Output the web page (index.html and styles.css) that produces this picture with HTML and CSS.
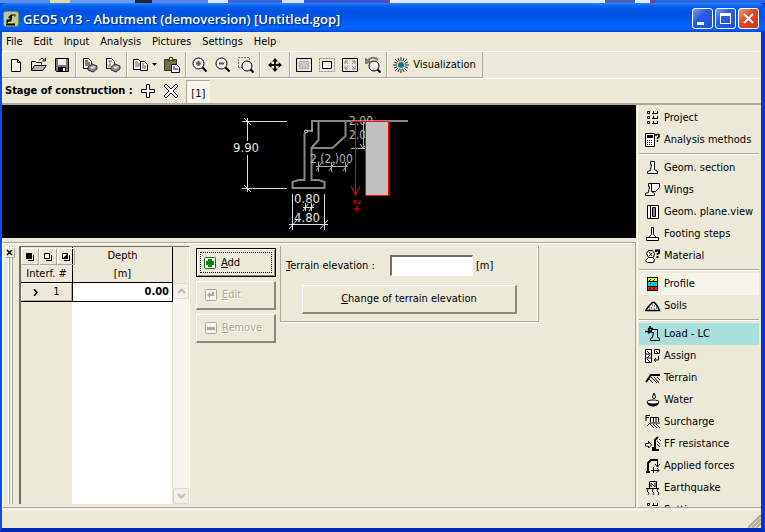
FILE: index.html
```
<!DOCTYPE html>
<html lang="en">
<head>
<meta charset="utf-8">
<title>GEO5 v13 - Abutment</title>
<link rel="stylesheet" href="styles.css">
</head>
<body>
<div class="desktop"></div>
<div class="window">
  <header class="titlebar">
    <svg class="app-icon" viewBox="0 0 16 16"><rect width="16" height="16" rx="3" fill="#74875e"/><rect x="1" y="1" width="14" height="14" rx="2" fill="#b9c99d"/><path d="M3 13.500h9M4.500 12V9.500h3l1-5h4M8 4.500L6 7" stroke="#000" stroke-width="2" fill="none"/><path d="M9 5l3-1-2 3z" fill="#fff200"/><path d="M5 11.500h5" stroke="#fff200"/></svg>
    <h1>GEO5 v13 - Abutment (demoversion) [Untitled.gop]</h1>
    <div class="captions">
      <button class="cap" aria-label="Minimize"><svg viewBox="0 0 19 19"><path d="M4 13h7v3H4z" fill="#fff"/></svg></button>
      <button class="cap" aria-label="Maximize"><svg viewBox="0 0 19 19"><path d="M4 4h11v11H4zM5 7v7h9V7z" fill="#fff" fill-rule="evenodd"/></svg></button>
      <button class="cap close" aria-label="Close"><svg viewBox="0 0 19 19"><path d="M5 5l9 9M14 5l-9 9" stroke="#fff" stroke-width="2"/></svg></button>
    </div>
  </header>
  <nav class="menu">
    <a href="#">File</a><a href="#">Edit</a><a href="#">Input</a><a href="#">Analysis</a><a href="#">Pictures</a><a href="#">Settings</a><a href="#">Help</a>
  </nav>
  <div class="toolbar">
    <div class="group">
      <button aria-label="New"><svg viewBox="0 0 16 16"><path d="M3.500 2.500h6l3 3v9h-9zM9.500 2.500v3h3" fill="#f6f5ee" stroke="#000"/></svg></button>
      <button aria-label="Open"><svg viewBox="0 0 16 16"><path d="M.5 13.500v-9h4l1 1h5v2" fill="#eee" stroke="#000"/><path d="M.5 13.500l3-5h12l-4 5z" fill="#b8b8b8" stroke="#000"/><path d="M8 3.500l2-2h2l2 2M14.500 1v3h-3" fill="none" stroke="#000"/></svg></button>
      <button aria-label="Save"><svg viewBox="0 0 16 16"><path d="M1.500 1.500h13v13h-12l-1-1z" fill="#777" stroke="#000"/><path d="M4 2h8v6H4z" fill="#eee"/><path d="M4 10h8v5H4z" fill="#000"/><path d="M9 11h2v3H9z" fill="#eee"/></svg></button>
    </div>
    <div class="group">
      <button aria-label="Print"><svg viewBox="0 0 16 16"><path d="M1.500 1.500h5l3 3v7h-8z" fill="#fff" stroke="#000"/><path d="M3 4h3M3 6h5M3 8h5" stroke="#000"/><path d="M6 10l4-3 5 2v3l-4 3-5-2z" fill="#888" stroke="#333"/><path d="M8 10l4-1 2 1-4 2z" fill="#ddd"/></svg></button>
      <button aria-label="Print picture"><svg viewBox="0 0 16 16"><path d="M1.500 1.500h5l3 3v7h-8z" fill="#eee" stroke="#000"/><path d="M3 4h4M5 4v5M3 9h3" stroke="#777"/><path d="M6 10l4-3 5 2v3l-4 3-5-2z" fill="#888" stroke="#333"/><path d="M8 10l4-1 2 1-4 2z" fill="#ddd"/></svg></button>
    </div>
    <div class="group">
      <button class="wide" aria-label="Copy"><svg viewBox="0 0 16 16"><path d="M.5 2.500h5l3 3v7h-8z" fill="#fff" stroke="#000"/><path d="M2 5h3M2 7h5M2 9h5" stroke="#555"/><path d="M7.500 4.500h4l3 3v6h-7z" fill="#fff" stroke="#000"/><path d="M9 7h2M9 9h4M9 11h4" stroke="#555"/></svg><svg class="drop" viewBox="0 0 5 3"><path d="M0 0h5L2.500 3z"/></svg></button>
      <button aria-label="Paste"><svg viewBox="0 0 16 16"><path d="M.5 2.500h12v11H.5z" fill="#77713c" stroke="#333"/><path d="M3.500 3.500v-1h2v-2h3v2h2v1z" fill="#ef3" stroke="#333"/><path d="M7.500 7.500h5l3 3v5h-8z" fill="#fff" stroke="#006"/><path d="M9 10h2M9 12h5" stroke="#006"/></svg></button>
    </div>
    <div class="group">
      <button aria-label="Zoom in"><svg viewBox="0 0 16 16"><circle cx="6.500" cy="6.500" r="5.500" fill="#eee" stroke="#000"/><path d="M4 6.500h5M6.500 4v5" stroke="#555" stroke-width="2"/><path d="M10.500 10.500l4 4" stroke="#000" stroke-width="2"/></svg></button>
      <button aria-label="Zoom out"><svg viewBox="0 0 16 16"><circle cx="6.500" cy="6.500" r="5.500" fill="#eee" stroke="#000"/><path d="M4 6.500h5" stroke="#555" stroke-width="2"/><path d="M10.500 10.500l4 4" stroke="#000" stroke-width="2"/></svg></button>
      <button aria-label="Zoom window"><svg viewBox="0 0 16 16"><path d="M.5 10V.5h11V4M.5 10.500H4" fill="none" stroke="#777" stroke-dasharray="2 1"/><circle cx="9" cy="9" r="5" fill="#eee" stroke="#000"/><path d="M12.500 12.500l3 3" stroke="#000" stroke-width="2"/></svg></button>
    </div>
    <div class="group pan">
      <button aria-label="Pan"><svg viewBox="0 0 16 16"><path d="M8 1l3 3.500H9V7h2.500V5L15 8l-3.500 3V9H9v2.500h2L8 15l-3-3.500h2V9H4.500v2L1 8l3.500-3v2H7V4.500H5z"/></svg></button>
    </div>
    <div class="group">
      <button aria-label="Zoom all"><svg viewBox="0 0 16 16"><path d="M.5 1.500h15v13H.5z" fill="#e4e4e0" stroke="#000"/><path d="M3.500 4.500h9v7h-9z" fill="#c8c8c8" stroke="#888" stroke-dasharray="1 1"/></svg></button>
      <button aria-label="Zoom selection"><svg viewBox="0 0 16 16"><path d="M.5 1.500h15v13H.5z" fill="none" stroke="#888" stroke-dasharray="2 1"/><path d="M3.500 4.500h9v7h-9z" fill="#eee" stroke="#000"/></svg></button>
      <button aria-label="Fit"><svg viewBox="0 0 16 16"><path d="M.5 1.500h15v13H.5z" fill="#e4e4e0" stroke="#000"/><path d="M3 7V4h3M10 4h3v3M13 9v3h-3M6 12H3V9M3 4l3 3M13 4l-3 3M13 12l-3-3M3 12l3-3" fill="none" stroke="#888"/></svg></button>
      <button aria-label="Previous zoom"><svg viewBox="0 0 16 16"><circle cx="9" cy="9" r="5" fill="#eee" stroke="#000"/><path d="M12.500 12.500l3 3" stroke="#000" stroke-width="2"/><path d="M0 2l1 4 4-1zM3 4c2-4 7-4 10-1" fill="none" stroke="#777" stroke-width="2"/></svg></button>
    </div>
    <div class="group last">
      <button class="vis"><svg viewBox="0 0 16 16"><path d="M8 0v16M0 8h16M2 2l12 12M14 2L2 14M5 1l6 14M11 1L5 15M1 5l14 6M15 5L1 11" stroke="#222"/><circle cx="8" cy="8" r="4" fill="#dde"/><circle cx="8" cy="8" r="3" fill="#087a78"/></svg>Visualization</button>
    </div>
  </div>
  <div class="stage">
    <strong>Stage of construction :</strong>
    <button aria-label="Add stage"><svg viewBox="0 0 16 16"><path d="M6.500 1.500h3v5h5v3h-5v5h-3v-5h-5v-3h5z" fill="#fff" stroke="#000"/></svg></button>
    <button aria-label="Remove stage"><svg viewBox="0 0 16 16"><path d="M1 3l2-2 5 5 5-5 2 2-5 5 5 5-2 2-5-5-5 5-2-2 5-5z" fill="#fff" stroke="#000"/></svg></button>
    <button class="stage-tab">[1]</button>
  </div>
  <div class="body">
    <main class="work">
      <svg class="drawing" viewBox="2 105 634 133" preserveAspectRatio="xMidYMid slice">
        <g fill="none" stroke="#ddd">
          <path d="M242 121.500h45M242 188.500h45M247.500 118v23M247.500 155v37M244 118l7 7M244 185l7 7"/>
          <path d="M292.500 194v36M324.500 194v36M289 224.500h39M289 229l8-9M320 229l8-9M305.500 203v8M311.500 203v8M303 207.500h11M303 211l5-7M309 211l5-7"/>
          <path d="M318.500 162v10M331.500 162v10M345.500 162v10M316 166.500h32M316 171l6-9M329 171l6-9M343 171l6-9M351 148.500h14M363.500 121v28M360 144l3 4 4-4" stroke="#aaa"/>
        </g>
        <path d="M304.500 133v47h-6l-6 2v6h32v-6l-6-2h-7v-32h21l13-12v-15M318.500 121v19l-7 8M306 131h6v-10h96" fill="none" stroke="#888" stroke-width="2"/>
        <circle cx="306" cy="131.500" r="1.500" fill="#000" stroke="#ddd"/>
        <g class="dims"><text x="233" y="152">9.90</text><text x="294" y="203">0.80</text><text x="294" y="222">4.80</text></g>
        <g class="dims dim-grey"><text x="310" y="163">2.(2.)00</text><text x="349" y="125">2.00</text><text x="349" y="139">2.0</text></g>
        <path d="M365.500 121.500h23v74h-23z" fill="#c0c0c0" stroke="#f00"/>
        <path d="M389 122v73" stroke="#f00"/>
        <path d="M351 121.500h15M355.500 121v75M351 186l4.500 9 4.500-9" fill="none" stroke="#f00"/>
        <text class="axis" transform="translate(360 213) rotate(-90)">+z</text>
      </svg>
      <section class="panel">
        <div class="grip"><button class="x" aria-label="Close panel"><svg viewBox="0 0 7 7"><path d="M1 1l5 5M6 1L1 6" stroke="#000" stroke-width="1.500"/></svg></button></div>
        <div class="grid-box">
          <table>
            <thead>
              <tr><th class="tools"><div><button aria-label="Select all"><svg viewBox="0 0 10 10"><path d="M1 1h6v6H1zM8 3h1v6H3V8h5z"/></svg></button><button aria-label="Select none"><svg viewBox="0 0 10 10"><path d="M1.500 1.500h5v5h-5z" fill="#fff" stroke="#000"/><path d="M8 3h1v6H3V8h5z"/></svg></button><button aria-label="Invert selection"><svg viewBox="0 0 10 10"><path d="M1.500 1.500h5v5h-5z" fill="#fff" stroke="#000"/><path d="M1 7l6-6v6zM8 3h1v6H3V8h5z"/></svg></button></div></th><th>Depth</th></tr>
              <tr><th>Interf. #</th><th>[m]</th></tr>
            </thead>
            <tbody><tr><th class="rowhead"><div><svg viewBox="0 0 5 7"><path d="M1 0l3 3.500L1 7" fill="none" stroke="#000" stroke-width="1.500"/></svg><span>1</span></div></th><td>0.00</td></tr></tbody>
          </table>
          <div class="scroll"><button aria-label="Scroll up"><svg viewBox="0 0 9 6"><path d="M1 5l3.500-3.500L8 5" fill="none" stroke="#bbb" stroke-width="2"/></svg></button><button aria-label="Scroll down"><svg viewBox="0 0 9 6"><path d="M1 1l3.500 3.500L8 1" fill="none" stroke="#bbb" stroke-width="2"/></svg></button></div>
        </div>
        <div class="actions">
          <button class="raised add"><svg viewBox="0 0 12 12"><rect x=".5" y=".5" width="11" height="11" rx="1" fill="#fff" stroke="#176b17"/><path d="M4 2h4v2h2v4H8v2H4V8H2V4h2z" fill="#0a860a"/></svg><span><u>A</u>dd</span></button>
          <button class="raised" disabled><svg viewBox="0 0 12 12"><rect x=".5" y=".5" width="11" height="11" rx="1" fill="#f6f5ee" stroke="#aca899"/><path d="M2 6l3-3v2h2V3h2v4H5v2z" fill="#aca899"/></svg><span><u>E</u>dit</span></button>
          <button class="raised" disabled><svg viewBox="0 0 12 12"><rect x=".5" y=".5" width="11" height="11" rx="1" fill="#f6f5ee" stroke="#aca899"/><path d="M2 5h8v3H2z" fill="#aca899"/></svg><span><u>R</u>emove</span></button>
        </div>
        <div class="terrain">
          <div class="field"><label for="elev"><u>T</u>errain elevation :</label><input id="elev" type="text"><span>[m]</span></div>
          <button class="raised change"><span><u>C</u>hange of terrain elevation</span></button>
        </div>
      </section>
    </main>
    <nav class="side">
      <a href="#"><svg viewBox="0 0 16 16"><path d="M2.500 1.500h2v2h-2zM2.500 6.500h2v2h-2zM2.500 11.500h2v2h-2zM7 3.500h6M7 8.500h6M7 13.500h6M8.500 1v2M12.500 1v2M8.500 6v2M12.500 6v2M8.500 11v2M12.500 11v2" fill="none" stroke="#000"/></svg>Project</a>
      <a href="#"><svg viewBox="0 0 16 16"><path d="M.5 1.500h9v13h-9z" fill="#fff" stroke="#000"/><path d="M2 3h6v3H2zM2 8h1v1H2zM4 8h1v1H4zM6 8h1v1H6zM2 10h1v1H2zM4 10h1v1H4zM6 10h1v1H6zM2 12h1v1H2zM4 12h1v1H4zM6 12h1v1H6z"/><path d="M11 4V2.500h3V5l-1.500 1v1M12.500 8v2" fill="none" stroke="#000" stroke-width="1.500"/></svg>Analysis methods</a>
      <hr>
      <a href="#"><svg viewBox="0 0 16 16"><path d="M2.500 13.500v-2l3-1 1-6h-1v-3h4v8l3 2v2z" fill="#fff" stroke="#000"/></svg>Geom. section</a>
      <a href="#"><svg viewBox="0 0 16 16"><path d="M.5 13.500v-2l3-1 1-6h-1v-3h3v8l3 2v2z" fill="#fff" stroke="#000"/><path d="M6.500 1.500h8v4l-4 4h-4z" fill="#fff" stroke="#000"/></svg>Wings</a>
      <a href="#"><svg viewBox="0 0 16 16"><path d="M2.500 1.500h11v13h-11z" fill="#fff" stroke="#000"/><path d="M5.500 1v14M7.500 3.500h3v9h-3z" fill="#888" stroke="#000"/></svg>Geom. plane.view</a>
      <a href="#"><svg viewBox="0 0 16 16"><path d="M1.500 11.500h12v3h-12zM3.500 11.500l3-3v-7h2v7l3 3z" fill="#fff" stroke="#000"/></svg>Footing steps</a>
      <a href="#"><svg viewBox="0 0 16 16"><path d="M1.500 5.500l2-3h4l2 3-1 4h-5zM3.500 9.500l-3 3 2 2h6l1-3-2-2" fill="#fff" stroke="#000"/><path d="M4 4l3 4M7 5l-3 3" stroke="#000"/><path d="M11 4V2.500h3V5l-1.500 1v1M12.500 8v2" fill="none" stroke="#000" stroke-width="2"/></svg>Material</a>
      <hr>
      <a href="#" class="hot"><svg viewBox="0 0 16 16"><path d="M2 1h11v14H2z"/><path d="M3 2h9v3H3z" fill="#ff0"/><path d="M3 6h9v4H3z" fill="#0dd"/><path d="M3 11h9v3H3z" fill="#e22"/><path d="M4 5l2-2M8 5l2-2M5 7.500h1M8 8.500h1M10 7.500h1M4 13l2-1M8 13l2-1" stroke="#000" fill="none"/></svg>Profile</a>
      <a href="#"><svg viewBox="0 0 16 16"><path d="M.5 12.500l3-4 4-4h2l3 4 2 4z" fill="#fff" stroke="#000" stroke-width="1.500"/><path d="M4 9h1M7 7h1M9 8h1M6 10h1M9 11h1M11 10h1M4 11h1" stroke="#000"/></svg>Soils</a>
      <hr>
      <a href="#" class="active"><svg viewBox="0 0 16 16"><path d="M5.500 14.500v-2l2-1 1-5h-2v-3h6v8l2 1v2z" fill="none" stroke="#000"/><path d="M5 0v3M3 2.500h5M0 5.500h6M3 3.500l3 2-3 2" fill="none" stroke="#000" stroke-width="1.500"/></svg>Load - LC</a>
      <a href="#"><svg viewBox="0 0 16 16"><path d="M.5 1.500h6v13h-6zM9.500 1.500h5v4h-5zM.5 6h6M.5 10h6" fill="#fff" stroke="#000"/><path d="M2 3l3 3M5 7l-3 3M2 11l3 3M11 3l2 2M13.500 8v4H9M11 10l-2 2 2 2" stroke="#000" fill="none"/></svg>Assign</a>
      <a href="#"><svg viewBox="0 0 16 16"><path d="M1 12l5-7h9" fill="none" stroke="#000" stroke-width="2"/><path d="M6 7l6 6M9 7l5 6M12 7l3 3M4 9l4 4" stroke="#000"/></svg>Terrain</a>
      <a href="#"><svg viewBox="0 0 16 16"><path d="M2 10h12c0 6-12 6-12 0z"/><ellipse cx="8" cy="10" rx="6" ry="2" fill="#fff" stroke="#000"/><path d="M9 1l1.500 4a1.500 1.500 0 01-3 0z" fill="#fff" stroke="#000"/></svg>Water</a>
      <a href="#"><svg viewBox="0 0 16 16"><path d="M1 7V1.500h4M1 3.500h3M5.500 8V3.500h8V8M8.500 4v4M11 4v4M2 12l3-3h10" fill="none" stroke="#000"/><path d="M5 10l4 4M8 10l4 4M11 10l4 4" stroke="#000"/></svg>Surcharge</a>
      <a href="#"><svg viewBox="0 0 16 16"><path d="M.5 7.500h3v-2l3 3.500-3 3v-2h-3z" fill="#fff" stroke="#000"/><path d="M13 1l-3 3v8H8v2h6" fill="none" stroke="#000" stroke-width="2"/><path d="M12 5l3 3M12 8l3 3M14 3l2 2" stroke="#000"/></svg>FF resistance</a>
      <a href="#"><svg viewBox="0 0 16 16"><path d="M1 14h4M3 14V5l3-3h7" fill="none" stroke="#000" stroke-width="2"/><path d="M12.500 2v7M10 6l2.500 3L15 6M8.500 9v6M6 12.500h8M12 10l2 2.500-2 2" fill="none" stroke="#000"/></svg>Applied forces</a>
      <a href="#"><svg viewBox="0 0 16 16"><path d="M4.500 8V1.500h7V8M6 7V3l4 4V3M1 8.500h13" fill="none" stroke="#000"/><path d="M3 9l-1 2 2 2-1 2M8 9l-1 2 2 2-1 2M13 9l-1 2 2 2-1 2" fill="none" stroke="#000"/></svg>Earthquake</a>
      <a href="#"><svg viewBox="0 0 16 16"><path d="M2.500 1.500h2v2h-2zM2.500 6.500h2v2h-2zM7 3.500h6M7 8.500h6M8.500 1v2M12.500 1v2M8.500 6v2M12.500 6v2" fill="none" stroke="#000"/></svg>Settings</a>
    </nav>
  </div>
  <footer class="status"><svg viewBox="0 0 13 13"><path d="M0 13L13 0M4 13l9-9M8 13l5-5" stroke="#aca899" stroke-width="2"/></svg></footer>
</div>
</body>
</html>
```
FILE: styles.css
```
:root {
  --face: #ece9d8;
  --shadow: #aca899;
  --dark: #716f64;
}
* { box-sizing: border-box; }
body {
  margin: 0;
  height: 100vh;
  display: flex;
  flex-direction: column;
  overflow: hidden;
  background: #0831d9;
  color: #000;
  font: 11px/14px "DejaVu Sans Condensed", "DejaVu Sans", sans-serif;
}
button, input { font: inherit; color: inherit; margin: 0; padding: 0; }
button { background: none; border: 0; }
a { color: inherit; text-decoration: none; }
svg { display: block; flex: none; width: 16px; height: 16px; }

.desktop {
  height: 3px;
  flex: none;
  background: linear-gradient(90deg, #5b8bef 0 50px, #ddd9a0 50px 70px, #6d9cf5 70px 135px, #223 135px 152px, #5a84ee 152px 208px, #dce6fb 208px 228px, #3a62dd 228px 282px, #dde 282px 304px, #3a56d2 304px 386px, #823f8b 386px 390px, #dfe9fb 390px 605px, #4565b8 605px 635px, #dfe9fb 635px 650px, #713a9a 650px 655px, #2a66ea 655px);
}
.window {
  flex: 1;
  min-height: 0;
  display: flex;
  flex-direction: column;
  border: solid;
  border-width: 0 4px 4px 2px;
  border-color: #0a3fe0 #0634d8 #0227b4 #0a50e8;
}
.titlebar {
  flex: none;
  height: 29px;
  margin: 0 -4px 0 -2px;
  padding: 2px 6px 0 3px;
  display: flex;
  align-items: center;
  gap: 4px;
  border-radius: 6px 6px 0 0;
  background: linear-gradient(#2c86f8 0, #0560f0 3px, #0052e2 8px, #0056ea 15px, #0066ff 24px, #005cf5 27px, #003fc8 29px);
}
.titlebar h1 {
  flex: 1;
  margin: 0;
  color: #fff;
  font: 600 13px/18px "Open Sans", "Noto Sans", sans-serif;
  white-space: nowrap;
  text-shadow: 1px 1px 1px #00217a;
}
.captions { display: flex; gap: 2px; }
.cap {
  width: 21px;
  height: 21px;
  border: 1px solid #fff;
  border-radius: 3px;
  background: linear-gradient(135deg, #7d9cf2, #2a5be4 40%, #1c50dd);
}
.cap svg { width: 19px; height: 19px; }
.cap.close { background: linear-gradient(135deg, #ee9a80, #e04a22 45%, #c8340c); }

.menu {
  flex: none;
  height: 20px;
  display: flex;
  align-items: center;
  gap: 11px;
  padding: 1px 4px 0;
  background: var(--face);
  border-bottom: 1px solid #fff;
}
.toolbar {
  flex: none;
  height: 27px;
  display: flex;
  background: var(--face);
  border-bottom: 1px solid #fff;
}
.group {
  display: flex;
  align-items: center;
  padding: 0 2px;
  border-right: 1px solid var(--shadow);
  border-bottom: 1px solid var(--shadow);
  box-shadow: inset 1px 0 #fff;
}
.group button { width: 23px; height: 24px; display: flex; align-items: center; justify-content: center; }
.group.pan { padding: 0 3px; }
.group .wide { width: 31px; gap: 3px; }
.group .drop { width: 5px; height: 3px; }
.group .vis { width: 91px; gap: 4px; padding-top: 1px; }
.stage {
  flex: none;
  height: 26px;
  padding: 0 3px;
  display: flex;
  align-items: center;
  gap: 7px;
  background: var(--face);
  border-bottom: 2px solid var(--shadow);
}
.stage-tab {
  align-self: stretch;
  width: 24px;
  margin-top: 1px;
  padding-top: 3px;
  background: #f6f4ec;
  border-left: 1px solid var(--shadow);
  border-top: 1px solid var(--shadow);
}

.body { flex: 1; min-height: 0; display: flex; background: var(--face); }
.work { flex: 1; min-width: 0; display: flex; flex-direction: column; }
.drawing { width: 100%; height: 133px; background: #000; }
.dims text { font: 13px "DejaVu Sans Condensed", sans-serif; fill: #e4e4e4; }
.dims.dim-grey text { font-size: 12px; fill: #b4b4b4; }
.axis { font: 11px "DejaVu Sans Condensed", sans-serif; fill: #f00; }

.panel {
  flex: 1;
  min-height: 0;
  margin-top: 4px;
  display: flex;
  align-items: flex-start;
  padding: 3px 0;
  border: 1px solid var(--shadow);
  border-left-color: #fff;
  box-shadow: inset 0 1px #fff;
}
.grip {
  align-self: stretch;
  width: 16px;
  padding: 1px 2px;
  background: linear-gradient(90deg, transparent 5px, #fff 5px 6px, var(--shadow) 6px 7px, transparent 7px 8px, #fff 8px 9px, var(--shadow) 9px 10px, transparent 10px);
}
.x { width: 10px; height: 11px; background: var(--face); border: 1px solid var(--shadow); border-top-color: #fff; border-left-color: #fff; }
.x svg { width: 7px; height: 7px; }
.grid-box {
  align-self: stretch;
  width: 171px;
  display: flex;
  border-left: 2px solid var(--dark);
  border-top: 1px solid var(--dark);
  border-right: 1px solid #fff;
  background: linear-gradient(90deg, var(--face) 51px, #fff 51px 151px, var(--face) 151px);
}
table { border-collapse: separate; border-spacing: 0; table-layout: fixed; width: 152px; height: 55px; flex: none; }
th, td { height: 18px; padding: 0; border-right: 1px solid #000; font-weight: normal; line-height: 16px; background: var(--face); }
th:first-child { width: 52px; }
thead tr:last-child th, tbody th, tbody td { border-bottom: 1px solid #000; }
.tools div { display: flex; }
.tools button { flex: 1; height: 17px; padding: 3px; border: 1px solid var(--shadow); border-top-color: #fff; border-left-color: #fff; }
.tools svg { width: 10px; height: 10px; }
.rowhead div { display: flex; align-items: center; justify-content: center; gap: 15px; border: 1px solid var(--shadow); border-top-color: #fff; border-left-color: #fff; }
.rowhead svg { width: 5px; height: 7px; }
td { background: #fff; text-align: right; padding-right: 3px; font-weight: bold; }
.scroll { flex: 1; margin-top: 36px; display: flex; flex-direction: column; justify-content: space-between; background: #f6f5f0; }
.scroll button { height: 16px; display: flex; align-items: center; justify-content: center; background: #f2f0e8; border: 1px solid #dddacb; border-radius: 2px; }
.scroll svg { width: 9px; height: 6px; }

.actions { width: 80px; margin: 2px 4px 0 6px; display: flex; flex-direction: column; gap: 4px; }
.raised {
  height: 29px;
  background: var(--face);
  border: solid;
  border-width: 1px 2px 2px 1px;
  border-color: #fff #8c897c #8c897c #fff;
  display: flex;
  align-items: center;
  justify-content: center;
}
.actions .raised { justify-content: flex-start; gap: 5px; padding-left: 8px; }
.actions svg { width: 12px; height: 12px; }
.actions .add { border: 1px solid #000; padding-left: 7px; box-shadow: inset 1px 1px #fff, inset -1px -1px #8c897c; outline: 1px dotted #000; outline-offset: -5px; }
.raised:disabled { color: var(--shadow); text-shadow: 1px 1px #fff; }
.terrain {
  width: 259px;
  height: 76px;
  padding: 9px 21px;
  border: 1px solid var(--shadow);
  border-top: 0;
  box-shadow: inset -1px 0 #fff, 0 1px #fff;
}
.field { display: flex; align-items: center; margin: 0 -16px 9px; }
.field label { width: 104px; }
.field input { width: 83px; height: 21px; margin-right: 3px; background: #fff; border: 1px solid; border-width: 2px 1px 1px 2px; border-color: var(--dark) #fff #fff var(--dark); }
.change { width: 100%; }

.side {
  flex: none;
  width: 124px;
  margin-left: 1px;
  padding: 2px 2px 0 1px;
  overflow: hidden;
  border-left: 1px solid #fff;
  border-bottom: 1px solid var(--shadow);
}
.side a { height: 22px; padding-left: 6px; display: flex; align-items: center; gap: 3px; white-space: nowrap; }
.side hr { height: 2px; margin: 2px 0; border: 0; border-top: 1px solid var(--shadow); border-bottom: 1px solid #fff; }
.side .hot { background: #f6f4e8; }
.side .active { background: #a9dfdc; }
.status { flex: none; height: 20px; display: flex; align-items: flex-end; justify-content: flex-end; background: var(--face); border-top: 3px solid #f4f2e8; }
.status svg { width: 13px; height: 13px; }
```
